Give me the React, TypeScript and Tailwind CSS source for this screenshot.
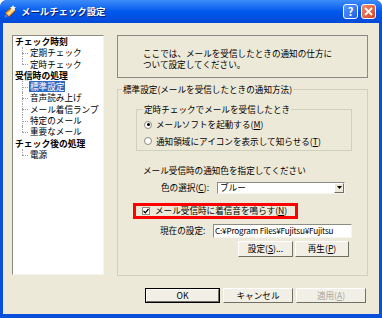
import React from 'react';

type TreeNode = { label: string; children?: { label: string; selected?: boolean }[] };

const tree: TreeNode[] = [
  { label: 'チェック時刻', children: [{ label: '定期チェック' }, { label: '定時チェック' }] },
  {
    label: '受信時の処理',
    children: [
      { label: '標準設定', selected: true },
      { label: '音声読み上げ' },
      { label: 'メール着信ランプ' },
      { label: '特定のメール' },
      { label: '重要なメール' },
    ],
  },
  { label: 'チェック後の処理', children: [{ label: '電源' }] },
];

function Key({ k }: { k: string }) {
  return (
    <>
      (<span className="underline">{k}</span>)
    </>
  );
}

function Btn({
  children,
  className = '',
  disabled = false,
  primary = false,
}: {
  children: React.ReactNode;
  className?: string;
  disabled?: boolean;
  primary?: boolean;
}) {
  return (
    <div className={`${primary ? 'border border-black' : ''} ${className}`}>
      <div
        className={`h-full w-full flex items-center justify-center bg-[#F1EFE6] border border-t-white border-l-white border-r-[#716F64] border-b-[#716F64] ${
          disabled ? 'text-[#ACA899]' : 'text-black'
        }`}
      >
        {children}
      </div>
    </div>
  );
}

function TitleIcon() {
  return (
    <svg width="15" height="15" viewBox="0 0 15 15">
      <path d="M2 9 L9 3 L13 6 L6 13 Z" fill="#F2A33A" stroke="#8A3A10" strokeWidth="0.8" />
      <path d="M4 9.5 L9 5 L11 6.5 L6 11 Z" fill="#FFE08A" />
      <path d="M10 1 L11 3 L13 3.2 L11.5 4.5 L12 6.5 L10 5.4 L8.2 6.5 L8.6 4.5 L7 3.2 L9 3 Z" fill="#FFFFFF" />
      <circle cx="3" cy="12" r="1.6" fill="#3B7BE0" />
    </svg>
  );
}

export default function App() {
  return (
    <div className="w-[382px] h-[318px] bg-[#0A4FDB] rounded-t-[7px] flex flex-col overflow-hidden font-['Noto_Sans_CJK_JP','Noto_Sans',sans-serif] text-[8.6px] leading-none text-black">
      {/* title bar */}
      <div className="h-[23px] shrink-0 flex items-center pl-[3px] pr-[6px] bg-gradient-to-b from-[#3C8CF7] via-[#0058EE] to-[#0249D6]">
        <TitleIcon />
        <span className="ml-[3px] text-white font-bold text-[9.4px] [text-shadow:1px_1px_0_#0A1E72]">メールチェック設定</span>
        <div className="ml-auto flex gap-[3px]">
          <div className="w-[15px] h-[15px] rounded-[3px] border border-white bg-gradient-to-br from-[#5A97FF] to-[#1E5EE0] flex items-center justify-center text-white font-bold text-[11px]">
            ?
          </div>
          <div className="w-[15px] h-[15px] rounded-[3px] border border-white bg-gradient-to-br from-[#F08A6A] to-[#D8411C] flex items-center justify-center">
            <svg width="9" height="9" viewBox="0 0 9 9">
              <path d="M1 1 L8 8 M8 1 L1 8" stroke="#fff" strokeWidth="1.8" />
            </svg>
          </div>
        </div>
      </div>

      {/* body */}
      <div className="flex-1 mx-[3px] mb-[4px] bg-[#ECE9D8] flex flex-col">
        <div className="flex pt-[12px] pl-[9px]">
          {/* tree */}
          <div className="w-[92px] h-[240px] bg-white border border-t-[#8E8C82] border-l-[#8E8C82] border-r-[#F5F4EE] border-b-[#F5F4EE] pl-[2px] leading-[11.3px]">
            {tree.map((node) => (
              <div key={node.label}>
                <div className="h-[11.3px] font-bold text-[8.8px] leading-[11.3px]">{node.label}</div>
                {node.children?.map((c, i) => {
                  const last = i === node.children!.length - 1;
                  return (
                    <div key={c.label} className="h-[11.3px] flex">
                      <div className="relative ml-[7px] w-[6px] h-[11.3px]">
                        <div
                          className={`absolute left-0 top-0 border-l border-dotted border-[#A0A0A0] ${
                            last ? 'h-1/2' : 'h-full'
                          }`}
                        />
                        <div className="absolute left-0 top-1/2 w-[6px] border-t border-dotted border-[#A0A0A0]" />
                      </div>
                      <span
                        className={`ml-[1px] px-[1px] leading-[11.3px] ${
                          c.selected ? 'bg-[#316AC5] text-white' : ''
                        }`}
                      >
                        {c.label}
                      </span>
                    </div>
                  );
                })}
              </div>
            ))}
          </div>

          {/* right column */}
          <div className="ml-[13px] w-[251px] flex flex-col">
            <div className="h-[43px] border border-[#8A8A84] pt-[12px] pl-[25px] leading-[10.5px]">
              <div>ここでは、メールを受信したときの通知の仕方に</div>
              <div>ついて設定してください。</div>
            </div>

            <fieldset className="mt-[6px] h-[192px] border border-[#D0D0BF] p-0 m-0 min-w-0">
              <legend className="ml-[4px] px-[1px] leading-[11px]">標準設定(メールを受信したときの通知方法)</legend>

              <fieldset className="mt-[9px] mx-[18px] mr-[15px] border border-[#D0D0BF] p-0 pb-[3px] min-w-0">
                <legend className="ml-[6px] px-[1px] leading-[11px]">定時チェックでメールを受信したとき</legend>
                <div className="mt-[4px] h-[11px] flex items-center pl-[7px]">
                  <div className="w-[8px] h-[8px] rounded-full bg-white border border-[#8E8C82] flex items-center justify-center">
                    <div className="w-[3px] h-[3px] rounded-full bg-black" />
                  </div>
                  <span className="ml-[4px]">
                    メールソフトを起動する<Key k="M" />
                  </span>
                </div>
                <div className="mt-[5.5px] h-[11px] flex items-center pl-[7px]">
                  <div className="w-[8px] h-[8px] rounded-full bg-white border border-[#8E8C82]" />
                  <span className="ml-[4px]">
                    通知領域にアイコンを表示して知らせる<Key k="T" />
                  </span>
                </div>
              </fieldset>

              <div className="mt-[14px] pl-[25px] h-[11px] flex items-center">メール受信時の通知色を指定してください</div>

              <div className="mt-[6px] flex items-center pl-[43px]">
                <span className="w-[56px]">
                  色の選択<Key k="C" />:
                </span>
                <div className="w-[128px] h-[12px] bg-white border border-t-[#8E8C82] border-l-[#8E8C82] border-r-[#F5F4EE] border-b-[#F5F4EE] flex items-center">
                  <span className="ml-[2px] flex-1">ブルー</span>
                  <div className="w-[10px] h-full bg-[#ECE9D8] border border-t-white border-l-white border-r-[#716F64] border-b-[#716F64] flex items-center justify-center">
                    <svg width="5" height="3" viewBox="0 0 5 3">
                      <path d="M0 0 H5 L2.5 3 Z" fill="#000" />
                    </svg>
                  </div>
                </div>
              </div>

              <div className="mt-[9px] ml-[15px] w-[165px] h-[16px] border-[3px] border-[#FF0000] flex items-center pl-[6px]">
                <div className="w-[8px] h-[8px] bg-white border border-[#8E8C82] flex items-center justify-center">
                  <svg width="6" height="6" viewBox="0 0 6 6">
                    <path d="M0.5 3 L2.3 4.8 L5.5 1" stroke="#000" strokeWidth="1.3" fill="none" />
                  </svg>
                </div>
                <span className="ml-[5px]">
                  メール受信時に着信音を鳴らす<Key k="N" />
                </span>
              </div>

              <div className="mt-[5px] flex items-center pl-[42px]">
                <span className="w-[53px]">現在の設定:</span>
                <div className="w-[139px] h-[14px] bg-white border border-t-[#8E8C82] border-l-[#8E8C82] border-r-[#F5F4EE] border-b-[#F5F4EE] flex items-center overflow-hidden whitespace-nowrap pl-[1px] text-[8.2px] tracking-[-0.2px]">
                  C:¥Program Files¥Fujitsu¥Fujitsu
                </div>
              </div>

              <div className="mt-[3px] flex pl-[120px] gap-[2px]">
                <Btn className="w-[55px] h-[16px]">
                  設定<Key k="S" />...
                </Btn>
                <Btn className="w-[54px] h-[16px]">
                  再生<Key k="P" />
                </Btn>
              </div>
            </fieldset>
          </div>
        </div>

        {/* dialog buttons */}
        <div className="mt-[12px] flex pl-[142px] gap-[3px]">
          <Btn primary className="w-[75px] h-[15px]">
            OK
          </Btn>
          <Btn className="w-[70px] h-[15px]">キャンセル</Btn>
          <Btn disabled className="w-[70px] h-[15px]">
            適用<Key k="A" />
          </Btn>
        </div>
      </div>
    </div>
  );
}
